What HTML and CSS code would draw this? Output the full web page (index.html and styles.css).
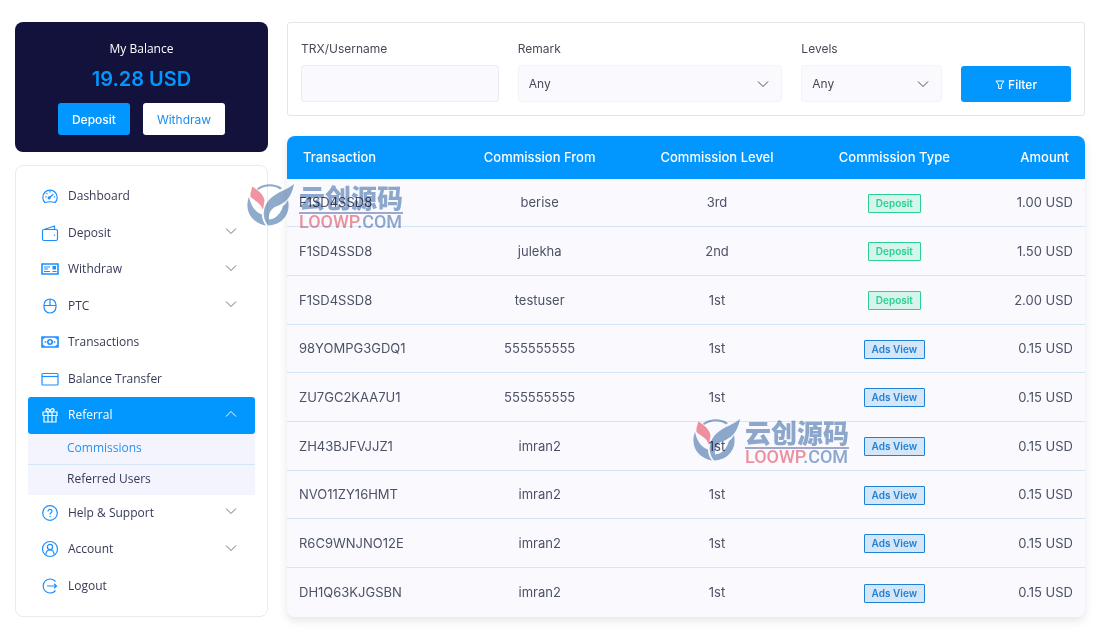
FILE: index.html
```html
<!DOCTYPE html>
<html lang="en">
<head>
<meta charset="utf-8">
<title>Commissions</title>
<link rel="stylesheet" href="styles.css">
</head>
<body>
<svg class="defs" aria-hidden="true">
  <symbol id="down" viewBox="0 0 12 8"><path d="M1 1.5 6 6.500 11 1.500"/></symbol>
  <symbol id="mark" viewBox="0 0 48 44">
    <path class="mark-blue" d="M11 5.500C18 0 29 0 36 5l-2 1.500C28 2 19 2 12 7Z"/>
    <path class="mark-blue" d="M3 14C-2 27 5 40 20 42.500c-3-4-4-7-4-11C9 29 5 23 3 14Z"/>
    <path class="mark-red" d="M6 3.500c9 5 12 10 12.500 14C18 21 17.500 24 17 27 15 20 9 18 4.500 14 4 9 6 7 6 3.500Z"/>
    <path class="mark-blue" d="M48 1C45 16 39 20 30 23.500c-6 2.500-7.500 8-7 13C26 36.500 34 34 37 23c2-1.500 4-4 5-6C45 30 37 42 22 42.500 15 34 17 22 25 15 33 8 41 7 48 1Z"/>
  </symbol>
</svg>
<div class="page">
  <aside class="sidebar">
    <section class="balance">
      <h2 class="balance-title">My Balance</h2>
      <p class="balance-value">19.28 USD</p>
      <div class="balance-actions">
        <button class="btn btn-primary" type="button">Deposit</button>
        <button class="btn btn-light" type="button">Withdraw</button>
      </div>
    </section>
    <nav class="menu">
      <a class="item" href="#"><svg class="icon" viewBox="0 0 18 18"><path d="M4 15.500A7.200 7.200 0 1 1 14 15.500Q9 14 4 15.500ZM8.200 10.800 12.300 7.200M9 4v1.500M4.200 9.800h1.300M12.800 9.800h1.300M5.400 6.200l1 1"/><circle cx="8.200" cy="10.800" r="1"/></svg><span>Dashboard</span></a>
      <a class="item" href="#"><svg class="icon" viewBox="0 0 18 18"><path d="M3 5.500h12q1.500 0 1.500 1.500v8q0 1.500-1.500 1.500h-12q-1.500 0-1.500-1.500v-8q0-1.500 1.500-1.500L13.500 2v3.500M13.500 10.500v1.200"/></svg><span>Deposit</span><svg class="chev"><use href="#down"/></svg></a>
      <a class="item" href="#"><svg class="icon" viewBox="0 0 18 18"><path class="bold" d="M1 4h16v10H1Z"/><path d="M3 7h6M3 9h4M3 11.500h6M11.500 11.500h4"/><path class="solid" d="M11.500 6h3.500v3.500h-3.500z"/></svg><span>Withdraw</span><svg class="chev"><use href="#down"/></svg></a>
      <a class="item" href="#"><svg class="icon" viewBox="0 0 18 18"><rect x="3" y="2" width="12" height="14" rx="6"/><path d="M3 8.500h12M9 2v6.500"/></svg><span>PTC</span><svg class="chev"><use href="#down"/></svg></a>
      <a class="item" href="#"><svg class="icon" viewBox="0 0 18 18"><path class="bold" d="M1 4h16v10H1Z"/><circle class="bold" cx="9" cy="9" r="2.200"/><path class="bold" d="M4.500 8.300v1.400M13.500 8.300v1.400"/><path d="M1.500 6 3.500 4.500M14.500 4.500l2 1.500M1.500 12l2 1.500M14.500 13.500l2-1.500"/></svg><span>Transactions</span></a>
      <a class="item" href="#"><svg class="icon" viewBox="0 0 18 18"><rect x="1" y="3.500" width="16" height="11.500" rx="1"/><path d="M1 6.500h16"/></svg><span>Balance Transfer</span></a>
      <a class="item item-active" href="#"><svg class="icon" viewBox="0 0 18 18"><path d="M2 6h14v3.500H2ZM3 9.500v6.500h12V9.500M7 6v10M11 6v10M9 6C5 6 4.200 4 5.500 3S8.800 3.500 9 6C9.200 3.500 11.200 2 12.500 3S13 6 9 6"/></svg><span>Referral</span><svg class="chev chev-up"><use href="#down"/></svg></a>
      <div class="submenu">
        <a class="subitem subitem-active" href="#">Commissions</a>
        <a class="subitem" href="#">Referred Users</a>
      </div>
      <a class="item" href="#"><svg class="icon" viewBox="0 0 18 18"><circle cx="9" cy="9" r="7.300"/><path d="M7 7.500C7 4.500 11.300 5 11 7.500 10.800 8.900 9 8.800 9 10.500M9 12v1"/></svg><span>Help &amp; Support</span><svg class="chev"><use href="#down"/></svg></a>
      <a class="item" href="#"><svg class="icon" viewBox="0 0 18 18"><circle cx="9" cy="9" r="7.500"/><circle cx="9" cy="7" r="2.600"/><path d="M5 14.500C5 8.500 13 8.500 13 14.500"/></svg><span>Account</span><svg class="chev"><use href="#down"/></svg></a>
      <a class="item" href="#"><svg class="icon" viewBox="0 0 18 18"><path d="M14.500 4.500A7 7 0 1 0 14.500 13.500M6 9h9.500M13 6.800 15.500 9 13 11.200"/></svg><span>Logout</span></a>
    </nav>
  </aside>
  <main class="main">
    <form class="filters">
      <div class="field">
        <label for="trx">TRX/Username</label>
        <input class="control" id="trx" type="text">
      </div>
      <div class="field">
        <label for="remark">Remark</label>
        <div class="select"><select class="control" id="remark"><option>Any</option></select><svg class="chev"><use href="#down"/></svg></div>
      </div>
      <div class="field">
        <label for="levels">Levels</label>
        <div class="select"><select class="control" id="levels"><option>Any</option></select><svg class="chev"><use href="#down"/></svg></div>
      </div>
      <button class="btn btn-primary btn-filter" type="button"><svg class="funnel" viewBox="0 0 10 10"><path d="M1 1h8L6.300 5v3.500H3.700V5Z"/></svg>Filter</button>
    </form>
    <table class="table">
      <colgroup><col class="col-trx"><col class="col-mid"><col class="col-mid"><col class="col-mid"><col class="col-amount"></colgroup>
      <thead><tr><th>Transaction</th><th>Commission From</th><th>Commission Level</th><th>Commission Type</th><th>Amount</th></tr></thead>
      <tbody>
        <tr><td>F1SD4SSD8</td><td>berise</td><td>3rd</td><td><span class="badge badge-green">Deposit</span></td><td>1.00 USD</td></tr>
        <tr><td>F1SD4SSD8</td><td>julekha</td><td>2nd</td><td><span class="badge badge-green">Deposit</span></td><td>1.50 USD</td></tr>
        <tr><td>F1SD4SSD8</td><td>testuser</td><td>1st</td><td><span class="badge badge-green">Deposit</span></td><td>2.00 USD</td></tr>
        <tr><td>98YOMPG3GDQ1</td><td>555555555</td><td>1st</td><td><span class="badge badge-blue">Ads View</span></td><td>0.15 USD</td></tr>
        <tr><td>ZU7GC2KAA7U1</td><td>555555555</td><td>1st</td><td><span class="badge badge-blue">Ads View</span></td><td>0.15 USD</td></tr>
        <tr><td>ZH43BJFVJJZ1</td><td>imran2</td><td>1st</td><td><span class="badge badge-blue">Ads View</span></td><td>0.15 USD</td></tr>
        <tr><td>NVO11ZY16HMT</td><td>imran2</td><td>1st</td><td><span class="badge badge-blue">Ads View</span></td><td>0.15 USD</td></tr>
        <tr><td>R6C9WNJNO12E</td><td>imran2</td><td>1st</td><td><span class="badge badge-blue">Ads View</span></td><td>0.15 USD</td></tr>
        <tr><td>DH1Q63KJGSBN</td><td>imran2</td><td>1st</td><td><span class="badge badge-blue">Ads View</span></td><td>0.15 USD</td></tr>
      </tbody>
    </table>
  </main>
</div>
<div class="stamp stamp-first"><svg class="stamp-logo"><use href="#mark"/></svg><div><div class="stamp-name" lang="zh">云创源码</div><div class="stamp-site"><span class="stamp-red">LOOWP</span>.COM</div></div></div>
<div class="stamp stamp-second"><svg class="stamp-logo"><use href="#mark"/></svg><div><div class="stamp-name" lang="zh">云创源码</div><div class="stamp-site"><span class="stamp-red">LOOWP</span>.COM</div></div></div>
</body>
</html>
```

FILE: styles.css
```css
* { box-sizing: border-box; }
body {
  position: relative;
  margin: 0;
  background: #fff;
  color: #363a57;
  font: 12px/18px "Open Sans", "Noto Sans", sans-serif;
}
a { color: inherit; text-decoration: none; }
svg { fill: none; stroke: currentColor; }
.defs { display: none; }
.page {
  display: grid;
  grid-template-columns: 253px minmax(0, 1fr);
  gap: 19px;
  padding: 22px 15px 18px;
}

.sidebar { display: flex; flex-direction: column; gap: 13px; }
.balance {
  padding: 18px 16px 17px;
  border-radius: 8px;
  background: #12123c;
  text-align: center;
}
.balance-title { margin: 0; color: #fff; font-size: 12px; font-weight: 500; line-height: 18px; }
.balance-value {
  margin: 7px 0 10px;
  color: #0296ff;
  font: 600 20px/28px Inter, sans-serif;
}
.balance-actions { display: flex; justify-content: center; gap: 13px; }
.btn {
  height: 32px;
  padding: 1px 14px 0;
  border: 0;
  border-radius: 3px;
  font: 500 12px/18px Inter, sans-serif;
}
.btn-primary { background: #0296ff; color: #fff; }
.btn-light { background: #fff; color: #1b8cf2; font-weight: 400; }

.menu {
  display: flex;
  flex: 1;
  flex-direction: column;
  padding: 12px;
  border: 1px solid #ebebef;
  border-radius: 8px;
}
.item {
  display: flex;
  flex: 1;
  align-items: center;
  gap: 9px;
  min-height: 36px;
  padding: 0 18px 0 13px;
  border-radius: 3px;
}
.icon { width: 18px; height: 18px; color: #1b8fff; stroke-width: 1.2; }
.bold { stroke-width: 1.6; }
.solid { fill: currentColor; stroke: none; }
.chev { width: 12px; height: 8px; margin-left: auto; color: #6f7386; }
.chev-up { transform: rotate(180deg); }
.item .chev { margin-bottom: 3px; }
.item-active, .item-active .icon, .item-active .chev { color: #fff; }
.item-active { background: #0296ff; }
.submenu { background: #f4f4fe; }
.subitem { display: block; padding: 5px 39px 7px; }
.subitem + .subitem { border-top: 1px solid #d3e6f7; }
.subitem-active { color: #2493f5; }

.main { display: flex; flex-direction: column; gap: 20px; }
.filters {
  display: grid;
  grid-template-columns: 198fr 265fr 141fr 110fr;
  align-items: end;
  gap: 19px;
  padding: 17px 13px 13px;
  border: 1px solid #e5e5e8;
  border-radius: 3px;
  color: #474b57;
  font: 400 12px/18px Inter, sans-serif;
}
.field { display: grid; gap: 7px; min-width: 0; }
.control {
  width: 100%;
  height: 37px;
  padding: 0 10px;
  border: 1px solid #ececf4;
  border-radius: 3px;
  background: #f9f9fe;
  color: #474b57;
  font: 400 12px/18px Inter, sans-serif;
  appearance: none;
}
.select { display: grid; align-items: center; }
.select > * { grid-area: 1 / 1; }
.select .control { border-color: #f3f3fa; }
.select .chev { margin-right: 13px; color: #4a4e5a; pointer-events: none; }
.btn-filter { display: flex; align-items: center; justify-content: center; gap: 3px; height: 36px; }
.funnel { width: 10px; height: 10px; }

.table {
  width: 100%;
  border-spacing: 0;
  border-radius: 8px;
  background: #f9f9fe;
  box-shadow: 0 4px 10px rgba(0, 0, 0, .1);
  color: #4c5166;
  font: 400 13px/18px Inter, sans-serif;
  table-layout: fixed;
}
.col-trx { width: 164px; }
.col-amount { width: 102px; }
th {
  height: 43px;
  padding: 0 0 1px;
  background: #0296ff;
  color: #fff;
  font-weight: 500;
}
th:first-child { padding-left: 16px; border-top-left-radius: 8px; }
th:last-child { padding-right: 16px; border-top-right-radius: 8px; }
td { height: 49px; padding: 0 0 1px; border-bottom: 1px solid #d5e6f6; text-align: center; }
tr:nth-child(3n + 1) td { height: 48px; }
td:first-child { padding-left: 12px; }
td:last-child { padding-right: 12px; }
th:first-child, td:first-child { text-align: left; }
th:last-child, td:last-child { text-align: right; }
td:nth-child(4) { padding-top: 2px; }
tr:last-child td { border-bottom: 0; }
.badge {
  display: inline-block;
  padding: 0 7px;
  border: 1px solid;
  border-radius: 1px;
  font-size: 10px;
  font-weight: 600;
  line-height: 17px;
  vertical-align: middle;
}
.badge-green { background: #d5f4ec; color: #2bd192; }
.badge-blue { background: #d4e6f8; color: #1f82d9; }

.stamp {
  position: absolute;
  display: flex;
  gap: 5px;
  color: #8fabcc;
  mix-blend-mode: multiply;
  pointer-events: none;
}
.stamp-first { left: 246px; top: 183px; }
.stamp-second { left: 692px; top: 418px; }
.stamp-logo { width: 48px; height: 44px; stroke: none; }
.mark-blue { fill: #8fabcc; }
.mark-red { fill: #f2949f; }
.stamp-name {
  height: 31px;
  border-bottom: 2px solid #a5abcb;
  font: 900 26px/28px "Noto Sans CJK SC", sans-serif;
}
.stamp-site { font: 500 18px/16px Roboto, sans-serif; }
.stamp-red { color: #f2949f; }
```
